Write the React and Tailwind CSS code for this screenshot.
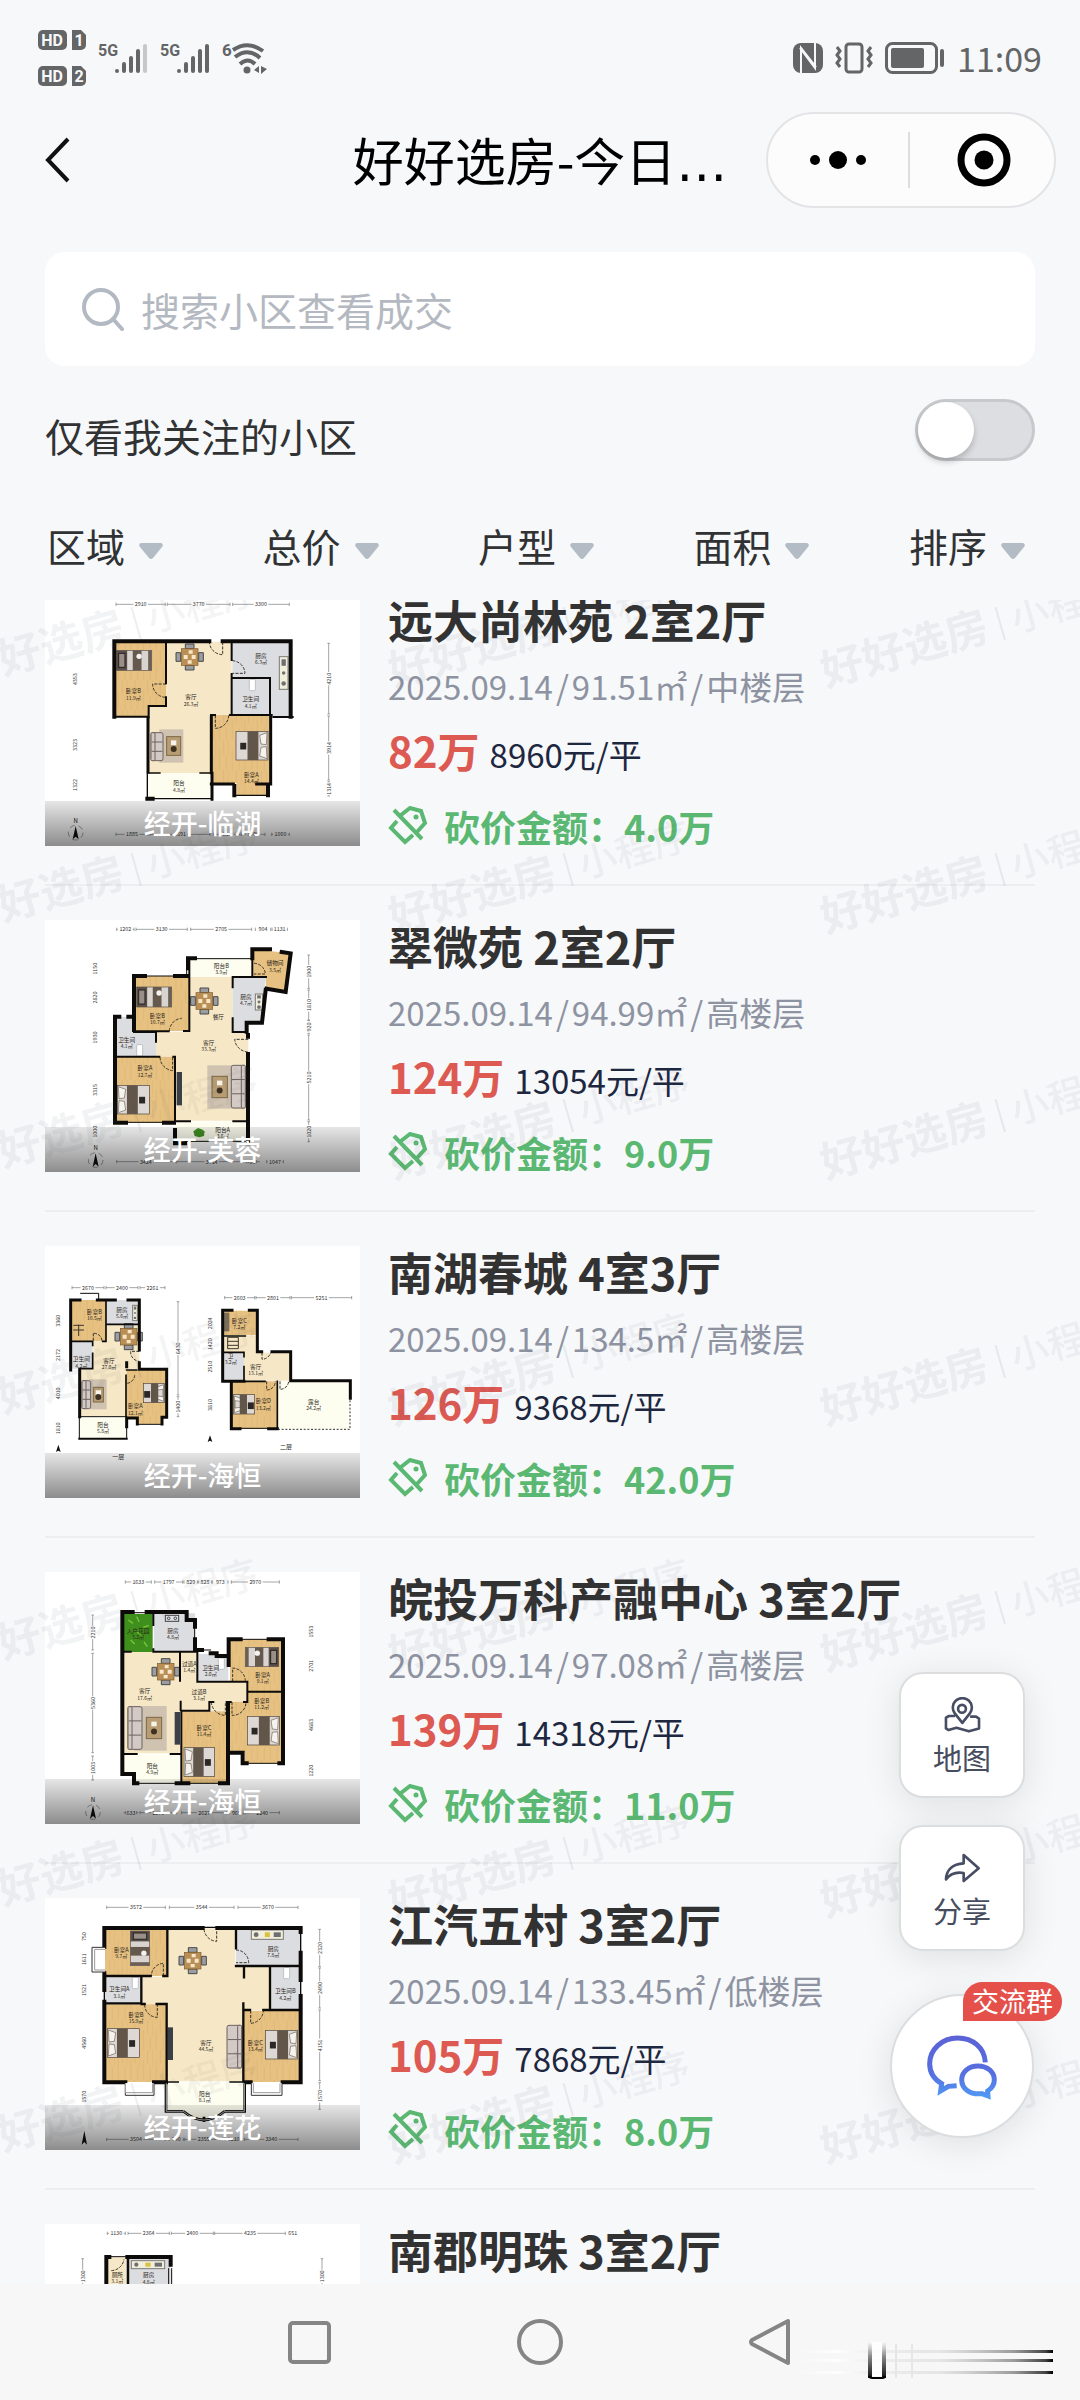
import React from "react";

const WOOD = "#e6c182";
const CREAM = "#f6e8c6";
const TILE = "#dcdde0";
const PALE = "#fdfeef";
const GRASS = "#3f8f1c";

/* ---------- floor plan furniture ---------- */

function Bed({ x, y, w = 96, h = 86, head = "left" }) {
  const flip = head === "right" ? `translate(${2 * x + w} 0) scale(-1 1)` : undefined;
  return (
    <g transform={flip}>
      <rect x={x} y={y} width={w} height={h} fill="#ddd8d4" stroke="#4a4038" strokeWidth="2" />
      <path d={`M${x + 3} ${y + 4}l22 8-4 26-16 2zM${x + 3} ${y + h - 4}l22-8-4-26-16-2z`} fill="#f6f3ee" stroke="#6b6258" strokeWidth="2" />
      <rect x={x + w * 0.3} y={y} width={w * 0.34} height={h} fill="#62564a" />
      <rect x={x + w * 0.68} y={y + h * 0.4} width="18" height="20" fill="#2b2724" />
    </g>
  );
}

function SingleBed({ x, y, w = 105, h = 60, head = "left" }) {
  const flip = head === "right" ? `translate(${2 * x + w} 0) scale(-1 1)` : undefined;
  return (
    <g transform={flip}>
      <rect x={x} y={y} width={w} height={h} fill="#d9d4d0" stroke="#5b5048" strokeWidth="2" />
      <rect x={x} y={y} width={w * 0.3} height={h} fill="#5a4f48" />
      <rect x={x + 6} y={y + 9} width={w * 0.18} height={h - 18} fill="#9a8f88" stroke="#26211e" strokeWidth="3" />
      <rect x={x + w * 0.46} y={y} width={w * 0.25} height={h} fill="#65594e" />
      <circle cx={x + w * 0.64} cy={y + h * 0.3} r="8" fill="#f4f1ee" />
      <rect x={x + w * 0.9} y={y} width={w * 0.1} height={h} fill="#6b5f55" />
    </g>
  );
}

function Dining({ x, y }) {
  return (
    <g>
      <path d={`M${x - 13} ${y - 39}h26v14h-26zM${x - 13} ${y + 25}h26v14h-26zM${x - 41} ${y - 13}h14v26h-14zM${x + 27} ${y - 13}h14v26h-14z`} fill="#9c9da0" stroke="#47484b" strokeWidth="3" />
      <rect x={x - 25} y={y - 25} width="50" height="50" fill="#b98f56" stroke="#7c5c30" strokeWidth="2" />
      <path d={`M${x - 18} ${y - 6}h12v12h-12zM${x + 6} ${y - 6}h12v12h-12zM${x - 3} ${y - 20}h12v10h-12zM${x - 6} ${y + 10}h12v10h-12z`} fill="#f7e6c8" />
    </g>
  );
}

function Sofa({ x, y, w = 42, h = 128, back = "left" }) {
  const bx = back === "left" ? x : x + w - 12;
  return (
    <g fill="#d3c9c5" stroke="#6d625f" strokeWidth="3">
      <rect x={x} y={y} width={w} height={h} rx="6" />
      <rect x={bx} y={y} width="12" height={h} rx="3" />
      <path d={`M${x + 2} ${y + h / 3}h${w - 4}M${x + 2} ${y + (2 * h) / 3}h${w - 4}`} />
    </g>
  );
}

function Rug({ x, y, w, h, tx, ty, tw = 46, th = 64 }) {
  return (
    <g>
      <rect x={x} y={y} width={w} height={h} fill="#cfc2b0" />
      <rect x={tx} y={ty} width={tw} height={th} fill="#b89d74" stroke="#7a6744" strokeWidth="3" />
      <rect x={tx + tw / 2 - 8} y={ty + th * 0.2} width="16" height="14" fill="#f7f3ea" />
      <circle cx={tx + tw / 2} cy={ty + th * 0.66} r="9" fill="#3d3222" />
    </g>
  );
}

function Tag({ x, y, name, area }) {
  return (
    <text x={x} y={y} textAnchor="middle" fontSize="17" fill="#2a241a">
      <tspan x={x}>{name}</tspan>
      <tspan x={x} dy="19" fontSize="15">{area}</tspan>
    </text>
  );
}

const Stove = ({ x, y, w, h }) => (
  <g>
    <rect x={x} y={y} width={w} height={h} fill="#f2eedc" stroke="#7b7a75" strokeWidth="3" />
    {w > h ? (
      <g fill="#6e6f73">
        <circle cx={x + w * 0.15} cy={y + h / 2} r={h * 0.26} />
        <rect x={x + w * 0.42} y={y + h * 0.25} width={w * 0.16} height={h * 0.5} fill="#d9c23f" />
        <rect x={x + w * 0.7} y={y + h * 0.25} width={w * 0.22} height={h * 0.5} />
      </g>
    ) : (
      <g fill="#6e6f73">
        <rect x={x + w * 0.25} y={y + h * 0.08} width={w * 0.5} height={h * 0.2} />
        <circle cx={x + w / 2} cy={y + h * 0.5} r={w * 0.2} />
        <circle cx={x + w / 2} cy={y + h * 0.82} r={w * 0.26} />
      </g>
    )}
  </g>
);

const Toilet = ({ x, y }) => <rect x={x} y={y} width="18" height="34" rx="3" fill="#fff" stroke="#a9abae" strokeWidth="2" />;

function HDim({ y, parts }) {
  return (
    <g>
      {parts.map(([x1, x2, label]) => (
        <g key={x1}>
          <path d={`M${x1} ${y}H${(x1 + x2) / 2 - 22}M${(x1 + x2) / 2 + 22} ${y}H${x2}M${x1} ${y - 5}v10M${x2} ${y - 5}v10`} stroke="#77797c" strokeWidth="2" />
          <text x={(x1 + x2) / 2} y={y + 6} textAnchor="middle" fontSize="16" fill="#333">{label}</text>
        </g>
      ))}
    </g>
  );
}

function VDim({ x, parts, line = true }) {
  return (
    <g>
      {parts.map(([y1, y2, label]) => {
        const m = (y1 + y2) / 2;
        return (
          <g key={y1}>
            {line && <path d={`M${x} ${y1}V${m - 20}M${x} ${m + 20}V${y2}M${x - 4} ${y1}h8M${x - 4} ${y2}h8`} stroke="#77797c" strokeWidth="2" />}
            <text x={x} y={m} transform={`rotate(-90 ${x} ${m})`} dy="6" textAnchor="middle" fontSize="16" fill="#333">{label}</text>
          </g>
        );
      })}
    </g>
  );
}

function North({ x, y }) {
  return (
    <g>
      <circle cx={x} cy={y} r="22" fill="none" stroke="#777" strokeWidth="2" strokeDasharray="16 12" />
      <path d={`M${x} ${y - 20}l9 40-9-8-9 8z`} fill="#111" />
      <text x={x} y={y - 30} textAnchor="middle" fontSize="18" fill="#111">N</text>
    </g>
  );
}

const Fill = ({ c, d }) => <path d={d} fill={c} />;
const Wall = ({ d, w = 12 }) => <path d={d} fill="none" stroke="#0c0b09" strokeWidth={w} strokeLinecap="square" />;
const Door = ({ d }) => <path d={d} fill="none" stroke="#3a352b" strokeWidth="3" strokeDasharray="9 4" />;

function Plan({ top, height = 756, children }) {
  return (
    <svg viewBox={`135 ${top} 945 ${height}`} className="block w-full" aria-hidden="true">
      <defs>
        <pattern id={`grain${top}`} width="38" height="90" patternUnits="userSpaceOnUse">
          <path d="M0 0V50M12 30V90M25 0V40M33 50V90" stroke="#c8984a" strokeOpacity=".35" strokeWidth="2" />
        </pattern>
      </defs>
      {children}
    </svg>
  );
}

/* ---------- the six plans ---------- */

function PlanA() {
  return (
    <Plan top={12}>
      <Fill c={CREAM} d="M445 345H498V155H695V375H637V550H445z" />
      <Fill c={WOOD} d="M343 155H498V345H445V380H343z" />
      <Fill c="url(#grain12)" d="M343 155H498V345H445V380H343z" />
      <Fill c={TILE} d="M697 155H872V380H697z" />
      <Fill c={WOOD} d="M637 375H812V580H804V615H710V580H637z" />
      <Fill c="url(#grain12)" d="M637 375H812V580H804V615H710V580H637z" />
      <Fill c={PALE} d="M445 550H635V625H445z" />
      <SingleBed x={350} y={181} />
      <Dining x={569} y={201} />
      <Rug x={478} y={418} w={72} h={100} tx={500} ty={440} tw={42} th={56} />
      <Sofa x={453} y={428} w={36} h={84} />
      <Bed x={708} y={424} head="right" />
      <Stove x={838} y={200} w={26} h={98} />
      <Toilet x={748} y={268} />
      <Door d="M628 154A40 40 0 0 0 668 194V154M697 212A40 40 0 0 1 735 250H697M498 282H458A40 40 0 0 0 498 322M646 376V415A40 40 0 0 0 686 376" />
      <Wall d="M343 380V154H628M668 154H872V380" />
      <Wall w={6} d="M498 160V280M498 322V348H446V382M695 160V210M695 252V375M697 264H810V375M633 375H645M690 375H815M343 380H445M820 381H878" />
      <Wall d="M444 385V545M634 380V548M812 380V582H770M634 582H700M636 550V628" w={9} />
      <Wall d="M703 588V616M804 590V616M442 626H458" />
      <Wall w={4} d="M710 616H800M442 550V620M460 626H635M445 549H480M600 549H635" />
      <Tag x={400} y={310} name="卧室B" area="11.9㎡" />
      <Tag x={573} y={328} name="客厅" area="26.3㎡" />
      <Tag x={783} y={204} name="厨房" area="6.3㎡" />
      <Tag x={752} y={334} name="卫生间" area="4.1㎡" />
      <Tag x={754} y={560} name="卧室A" area="14.4㎡" />
      <Tag x={537} y={586} name="阳台" area="4.8㎡" />
      <HDim y={43} parts={[[348, 496, "2910"], [502, 690, "3770"], [698, 868, "3300"]]} />
      <HDim y={733} parts={[[348, 444, "1885"], [450, 630, "3591"], [640, 720, "980"], [724, 795, "1700"], [815, 868, "1060"]]} />
      <VDim x={224} line={false} parts={[[180, 355, "4353"], [400, 530, "3323"], [550, 620, "1322"]]} />
      <VDim x={986} parts={[[160, 372, "4210"], [378, 570, "3914"], [575, 618, "1314"]]} />
      <North x={227} y={728} />
    </Plan>
  );
}

function PlanB() {
  return (
    <Plan top={60}>
      <Fill c={CREAM} d="M568 230H698V395H745V662H525V470H468V395H568z" />
      <Fill c={WOOD} d="M402 228H568V393H402zM345 470H525V668H345z" />
      <Fill c="url(#grain60)" d="M402 228H568V393H402zM345 470H525V668H345z" />
      <Fill c={WOOD} d="M757 148L873 160L856 276L798 266V230H757z" />
      <Fill c={TILE} d="M345 350H405V395H468V470H345zM698 232H798L786 368H738V395H698z" />
      <Fill c={PALE} d="M565 177H760V230H565zM525 665H745V725H525z" />
      <SingleBed x={410} y={261} />
      <Bed x={352} y={556} />
      <Dining x={613} y={303} />
      <Rug x={622} y={496} w={114} h={130} tx={636} ty={529} />
      <Sofa x={694} y={496} back="right" />
      <rect x="530" y="516" width="16" height="100" fill="#3b4048" />
      <Stove x={766} y={282} w={22} h={48} />
      <Toilet x={410} y={434} />
      <path d="M580 694l14-10 10 4 10 6-2 14-14 4-14-4z" fill="#3f9124" />
      <Door d="M508 393A40 40 0 0 1 545 355M480 472A42 42 0 0 0 518 512V472M745 418H704A42 42 0 0 0 745 456M762 190A34 34 0 0 1 796 222H762" />
      <Wall d="M402 390V228H435M525 228H562M345 350H358M385 350H400M345 350V668H378M492 668H522M345 352V400M564 205V175H585M757 175V148H810M845 156L872 160L857 276L800 266M797 270L786 368H740V395M744 410V405M744 462V730M525 690V730H555" />
      <Wall w={6} d="M568 178V393H552M402 394H506M402 396H468V425M345 470H478M520 470H525V668M698 232V262M698 355V396H738M698 231H798M757 178V230M525 664H570M700 664H744" />
      <Wall w={3} d="M435 228H525M585 176H757M378 667H492M560 180V228M555 724H740" />
      <Tag x={472} y={353} name="卧室B" area="10.7㎡" />
      <Tag x={655} y={356} name="餐厅" area="" />
      <Tag x={380} y={426} name="卫生间" area="4.1㎡" />
      <Tag x={435} y={511} name="卧室A" area="12.7㎡" />
      <Tag x={626} y={435} name="客厅" area="33.3㎡" />
      <Tag x={738} y={296} name="厨房" area="4.7㎡" />
      <Tag x={825} y={196} name="储物间" area="3.5㎡" />
      <Tag x={664} y={203} name="阳台B" area="3.9㎡" />
      <Tag x={668} y={696} name="阳台A" area="3.6㎡" />
      <HDim y={88} parts={[[350, 402, "1202"], [408, 562, "3130"], [572, 755, "2705"], [766, 812, "904"], [816, 862, "1131"]]} />
      <HDim y={785} parts={[[350, 525, "3424"], [530, 740, "3714"], [745, 770, "60"], [800, 850, "1047"]]} />
      <VDim x={285} line={false} parts={[[180, 232, "1150"], [240, 345, "2820"], [360, 465, "1930"], [480, 660, "3315"], [670, 720, "1000"]]} />
      <VDim x={926} parts={[[165, 265, "1900"], [270, 360, "1810"], [362, 400, "920"], [405, 660, "5210"], [665, 725, "1020"]]} />
      <North x={287} y={780} />
    </Plan>
  );
}

function PlanC() {
  return (
    <Plan top={78}>
      <Fill c={CREAM} d="M320 313H418V448H380V588H240V448H280V365H320z" />
      <Fill c={WOOD} d="M212 240H318V364H212zM380 450H500V592H484V612H415V592H380z" />
      <Fill c="url(#grain78)" d="M212 240H318V364H212zM380 450H500V592H484V612H415V592H380z" />
      <Fill c={TILE} d="M320 240H418V312H320zM212 365H278V446H212z" />
      <Fill c={PALE} d="M238 592H380V655H238z" />
      <Fill c={CREAM} d="M670 348H772V398H872V482H732V398H670z" />
      <Fill c={WOOD} d="M670 272H772V346H670zM694 484H832V626H694z" />
      <Fill c="url(#grain78)" d="M670 272H772V346H670zM694 484H832V626H694z" />
      <Fill c={TILE} d="M670 398H732V484H670z" />
      <Fill c={PALE} d="M834 484H1050V628H834z" />
      <Dining x={386} y={350} />
      <Rug x={268} y={478} w={52} h={90} tx={280} ty={502} tw={30} th={44} />
      <Sofa x={246} y={482} w={26} h={84} />
      <Bed x={430} y={490} w={64} h={58} head="right" />
      <Bed x={700} y={524} w={64} h={58} />
      <Stove x={398} y={256} w={14} h={46} />
      <path d="M220 316h32M220 330h32M236 314v34M683 352h32v34h-32zM683 364h32M683 376h32" fill="none" stroke="#40372a" strokeWidth="3" />
      <rect x="672" y="278" width="16" height="56" fill="#7b6d58" />
      <Door d="M418 394H392A28 28 0 0 0 418 424M382 490A26 26 0 0 0 404 466M786 398V418A28 28 0 0 0 812 398M800 484V510A26 26 0 0 0 826 484M840 484V508A26 26 0 0 0 866 484M280 340V364M282 340A24 24 0 0 1 306 362" />
      <Wall w={9} d="M212 450V240H240M292 240H346M384 240H418V390M418 428V448H500V592H486V612M412 612V594H380M239 450V590M380 440V428M380 600V620" />
      <Wall w={9} d="M668 484V271H696M748 271H772V395H785M816 395H872V482H1051V535M668 484H732M694 488V626H720M806 626H832" />
      <Wall w={5} d="M318 240V364H308M212 364H278V376M278 400V446H238M320 313H412M380 450H410M378 466V588M670 348H736M732 398V410M670 397H732M732 440V484H760M832 484V626M765 484H795" />
      <Wall w={3} d="M242 220H296V240M415 613H484M238 590V656M380 590V656M238 590H378M720 625H806" />
      <Wall w={6} d="M238 656H380" />
      <path d="M834 628H1050V535" fill="none" stroke="#333" strokeWidth="3" strokeDasharray="6 5" />
      <Tag x={283} y={281} name="卧室B" area="10.5㎡" />
      <Tag x={366} y={276} name="厨房" area="5.6㎡" />
      <Tag x={244} y={424} name="卫生间" area="4.2㎡" />
      <Tag x={327} y={428} name="客厅" area="27.0㎡" />
      <Tag x={406} y={565} name="卧室A" area="12.1㎡" />
      <Tag x={309} y={621} name="阳台" area="5.8㎡" />
      <Tag x={718} y={308} name="卧室C" area="7.2㎡" />
      <Tag x={692} y={414} name="卫" area="3.2㎡" />
      <Tag x={767} y={446} name="客厅" area="13.1㎡" />
      <Tag x={790} y={550} name="卧室D" area="13.2㎡" />
      <Tag x={941} y={552} name="露台" area="24.2㎡" />
      <HDim y={203} parts={[[216, 312, "2670"], [318, 414, "2400"], [420, 495, "2261"]]} />
      <HDim y={233} parts={[[674, 764, "2603"], [768, 870, "2801"], [874, 1055, "5251"]]} />
      <VDim x={175} line={false} parts={[[245, 360, "3360"], [370, 440, "2172"], [455, 585, "4010"], [595, 655, "1810"]]} />
      <VDim x={534} parts={[[245, 525, "6430"], [530, 590, "1400"]]} />
      <VDim x={630} line={false} parts={[[275, 345, "2024"], [350, 395, "1420"], [400, 480, "2510"], [490, 620, "3810"]]} />
      <path d="M175 674l7 22-7-4-7 4zM630 646l7 20-7-4-7 4z" fill="#111" />
      <text x="355" y="718" textAnchor="middle" fontSize="18" fill="#222">一层</text>
      <text x="858" y="688" textAnchor="middle" fontSize="18" fill="#222">二层</text>
    </Plan>
  );
}

function PlanD() {
  return (
    <Plan top={66}>
      <Fill c={GRASS} d="M372 192H458V306H372z" />
      <Fill c={TILE} d="M462 190H585V303H462zM592 312H685V392H592z" />
      <Fill c={CREAM} d="M372 306H592V395H742V455H680V482H542V610H372z" />
      <Fill c={WOOD} d="M690 268H848V640H735V605H685V455H742V395H690zM545 484H683V700H545z" />
      <Fill c="url(#grain66)" d="M690 268H848V640H735V605H685V455H742V395H690zM545 484H683V700H545z" />
      <Fill c={PALE} d="M372 612H542V700H408V665H372z" />
      <path d="M385 210l14 10M410 200l8 16M430 232l16-6M392 270l12 12M432 276l10 14M412 246l10 8" stroke="#79c53c" strokeWidth="4" />
      <g fill="#dfe1e4" stroke="#444" strokeWidth="3"><rect x="496" y="196" width="40" height="18" /><circle cx="506" cy="205" r="4" /><circle cx="526" cy="205" r="4" /></g>
      <Dining x={497} y={365} />
      <Rug x={402} y={468} w={98} h={134} tx={439} ty={502} />
      <Sofa x={384} y={470} />
      <rect x="524" y="486" width="16" height="98" fill="#3b4048" />
      <SingleBed x={736} y={292} w={100} h={58} head="right" />
      <Bed x={742} y={499} head="right" />
      <Bed x={552} y={593} w={92} />
      <Toilet x={655} y={324} />
      <Door d="M698 394V354A40 40 0 0 1 736 392M696 456V496A40 40 0 0 0 738 458M634 456A42 42 0 0 0 676 496V458" />
      <Wall d="M367 668V186H398M440 186H560V210H585V230M585 268V300H606M632 310H650V318H686M686 345V268H722M806 268H849V640H838M367 672H402V700H412M684 460V700H660M686 608H728V640H740M530 700H565" />
      <Wall w={6} d="M460 190V225M460 298V305H592V392M540 392V308M375 305H392M592 395H742V430M742 425H848M640 456H628V482H544V700M542 455V480M680 456H692M375 612H410M512 612H542M732 456H742V428" />
      <Wall w={3} d="M398 188H440M584 230V268M606 300H632M722 268H806M740 640H838M412 700H530M565 700H660" />
      <Tag x={414} y={248} name="入户花园" area="3.2㎡" />
      <Tag x={519} y={248} name="厨房" area="4.8㎡" />
      <Tag x={568} y={348} name="过道A" area="1.4㎡" />
      <Tag x={632} y={360} name="卫生间" area="2.0㎡" />
      <Tag x={788} y={380} name="卧室A" area="9.1㎡" />
      <Tag x={434} y={430} name="客厅" area="17.6㎡" />
      <Tag x={597} y={432} name="过道B" area="3.1㎡" />
      <Tag x={785} y={458} name="卧室B" area="11.2㎡" />
      <Tag x={612} y={540} name="卧室C" area="11.4㎡" />
      <Tag x={457} y={653} name="阳台" area="4.9㎡" />
      <HDim y={96} parts={[[376, 454, "1633"], [464, 548, "1797"], [552, 592, "829"], [596, 634, "828"], [638, 684, "973"], [694, 838, "2970"]]} />
      <HDim y={788} parts={[[376, 410, "633"], [420, 530, "2370"], [545, 680, "2627"], [688, 730, "965"], [735, 838, "2240"]]} />
      <VDim x={278} parts={[[195, 300, "2210"], [310, 608, "5360"], [618, 690, "1003"]]} />
      <VDim x={933} line={false} parts={[[200, 290, "1553"], [300, 395, "2701"], [430, 620, "4683"], [632, 692, "1220"]]} />
      <North x={279} y={786} />
    </Plan>
  );
}

function PlanE() {
  return (
    <Plan top={84}>
      <Fill c={CREAM} d="M502 175H706V290H810V420H730V634H502V402H425V320H502z" />
      <Fill c={WOOD} d="M315 175H500V318H315zM315 403H500V636H315zM732 422H900V636H732z" />
      <Fill c="url(#grain84)" d="M315 175H500V318H315zM315 403H500V636H315zM732 422H900V636H732z" />
      <Fill c={TILE} d="M708 175H902V288H708zM812 292H902V418H812zM315 322H423V400H315z" />
      <Fill c={PALE} d="M500 636H732V724H674Q612 776 550 724H500z" />
      <g transform="rotate(90 420 235)"><SingleBed x={368} y={206} w={104} h={58} /></g>
      <Dining x={578} y={272} />
      <Sofa x={681} y={466} w={44} h={128} back="right" />
      <rect x="503" y="472" width="16" height="98" fill="#3b4048" />
      <Bed x={322} y={476} />
      <Bed x={797} y={481} w={96} head="right" />
      <Stove x={754} y={180} w={96} h={28} />
      <Toilet x={397} y={322} />
      <Toilet x={851} y={292} />
      <Door d="M612 178A40 40 0 0 0 650 214V178M708 240A38 38 0 0 1 746 278H708M490 318V280A38 38 0 0 0 454 318M434 404A38 38 0 0 0 472 442V404M752 422V460A40 40 0 0 0 790 422" />
      <Wall d="M313 230V174H608M652 174H902V186M902 248V330M902 378V637H848M752 637H738M313 310V360M313 395V637H376M462 637H498" />
      <Wall w={7} d="M502 180V318H490M452 318H318M424 322V400H318M470 402H500V634M708 180V235M708 288H900M732 292V322M810 292V415M730 400V634M735 420H750M790 420H900M425 402H434" />
      <Wall w={4} d="M500 636H535M690 636H732M313 360V395M902 186V248M902 330V378M612 172H650" />
      <path d="M498 640V724H550M734 640V724H674M550 724Q612 776 674 724M612 740V756" fill="none" stroke="#0c0b09" strokeWidth="8" />
      <path d="M499 640V724H550M733 640V724H674M550 724Q612 776 674 724" fill="none" stroke="#fff" strokeWidth="2" />
      <g fill="#fff" stroke="#333" strokeWidth="3">
        <path d="M315 232H276V306H315M376 640V676H462V640M754 640V676H846V640" />
        <path d="M315 238H284V300H315M376 640V668H458V640M760 640V668H840V640" stroke="#999" />
      </g>
      <Tag x={364} y={245} name="卧室A" area="9.7㎡" />
      <Tag x={820} y={243} name="厨房" area="7.8㎡" />
      <Tag x={358} y={364} name="卫生间A" area="3.1㎡" />
      <Tag x={856} y={370} name="卫生间B" area="4.2㎡" />
      <Tag x={408} y={440} name="卧室B" area="15.9㎡" />
      <Tag x={618} y={525} name="客厅" area="44.5㎡" />
      <Tag x={766} y={525} name="卧室C" area="13.4㎡" />
      <Tag x={614} y={678} name="阳台" area="8.1㎡" />
      <HDim y={112} parts={[[320, 496, "3572"], [508, 702, "3544"], [714, 894, "3670"]]} />
      <HDim y={808} parts={[[320, 496, "3504"], [508, 550, "740"], [554, 668, "2355"], [674, 728, "1210"], [734, 894, "3340"]]} />
      <VDim x={253} line={false} parts={[[180, 220, "750"], [225, 310, "1611"], [325, 395, "1521"], [405, 632, "4560"], [640, 720, "1570"]]} />
      <VDim x={959} parts={[[178, 290, "2320"], [294, 414, "2490"], [420, 632, "4151"], [638, 718, "1570"]]} />
      <path d="M253 782l8 42-8-8-8 8z" fill="#111" />
    </Plan>
  );
}

function PlanF() {
  return (
    <Plan top={0}>
      <Fill c={CREAM} d="M325 100H378V400H325z" />
      <Fill c={TILE} d="M390 100H512V400H390z" />
      <Stove x={394} y={110} w={100} h={24} />
      <Door d="M334 140A40 40 0 0 0 372 106" />
      <Wall d="M319 400V99H328M382 99H512V122" />
      <Wall w={8} d="M384 104V400" />
      <Wall w={3} d="M328 98H382M506 134V400M515 134V400" />
      <Tag x={352} y={158} name="厕所" area="3.1㎡" />
      <Tag x={446} y={160} name="厨房" area="4.8㎡" />
      <HDim y={28} parts={[[322, 376, "1130"], [384, 508, "2364"], [514, 640, "2400"], [644, 856, "4235"]]} />
      <text x="878" y="34" textAnchor="middle" fontSize="16" fill="#333">651</text>
      <VDim x={248} parts={[[104, 210, "1300"]]} />
      <VDim x={966} parts={[[104, 210, "1300"]]} />
    </Plan>
  );
}

/* ---------- icons ---------- */

const HdBadge = ({ n }) => (
  <svg width="48" height="20" viewBox="0 0 48 20" className="block" role="img" aria-label={`HD ${n}`}>
    <rect width="29" height="20" rx="5" fill="#646566" />
    <path d="M34 0h9l5 5v10a5 5 0 0 1-5 5h-9z" fill="#646566" />
    <text x="14" y="16" textAnchor="middle" fontSize="16" fontWeight="700" fill="#f7f8fa" fontFamily="Roboto, sans-serif">HD</text>
    <text x="41" y="16" textAnchor="middle" fontSize="16" fontWeight="700" fill="#f7f8fa" fontFamily="Roboto, sans-serif">{n}</text>
  </svg>
);

function Signal({ weak }) {
  return (
    <svg width="50" height="32" viewBox="0 0 50 32" role="img" aria-label="5G">
      <text x="0" y="14" fontSize="16" fontWeight="700" fill="#646566" fontFamily="Roboto, sans-serif">5G</text>
      <g stroke="#646566" strokeWidth="4" strokeLinecap="round">
        <path d="M19 29v0M26 22v7M33 16v13M40 9v20" />
        <path d="M47 4v25" stroke={weak ? "#c6c7c8" : "#646566"} />
      </g>
    </svg>
  );
}

const WifiSix = () => (
  <svg width="46" height="32" viewBox="0 0 46 32" role="img" aria-label="Wi-Fi 6">
    <text x="0" y="14" fontSize="17" fontWeight="700" fill="#646566" fontFamily="Roboto, sans-serif">6</text>
    <g fill="none" stroke="#646566" strokeWidth="4">
      <path d="M11 8Q26-2 41 9M13 15Q26 5 38 16M18 22Q26 15 33 22" />
    </g>
    <circle cx="25" cy="28" r="3.500" fill="#646566" />
    <path d="M37 24v7l-5-3zM39 24v8l6-5z" fill="#646566" />
  </svg>
);

const Nfc = () => (
  <svg width="30" height="30" viewBox="0 0 30 30" aria-hidden="true">
    <rect width="30" height="30" rx="8" fill="#646566" />
    <path d="M8 30V5l15 19M22 0v25L7 5" fill="none" stroke="#f7f8fa" strokeWidth="2" />
  </svg>
);

const Vibrate = () => (
  <svg width="38" height="32" viewBox="0 0 38 32" aria-hidden="true" fill="none" stroke="#646566" strokeWidth="3">
    <rect x="11" y="2" width="16" height="28" rx="3" />
    <path d="M2 5l3 4-3 4 3 4-3 4 3 4M36 5l-3 4 3 4-3 4 3 4-3 4" />
  </svg>
);

const Battery = () => (
  <svg width="60" height="32" viewBox="0 0 60 32" role="img" aria-label="battery">
    <rect x="1.500" y="1.500" width="50" height="29" rx="6" fill="none" stroke="#646566" strokeWidth="3" />
    <rect x="6" y="6" width="33" height="20" rx="2" fill="#646566" />
    <path d="M57 9v14" stroke="#646566" strokeWidth="4" strokeLinecap="round" />
  </svg>
);

const TagIcon = () => (
  <svg width="40" height="40" viewBox="0 0 40 40" aria-hidden="true" fill="none" stroke="#5bb872" strokeWidth="4">
    <path d="M6 4l28 29M13 9l9-7 11 3 4 12-8 9M9 15l-6 7 14 14 8-7" />
    <circle cx="28" cy="11" r="2.500" fill="#5bb872" stroke="none" />
  </svg>
);

const MapIcon = () => (
  <svg width="38" height="36" viewBox="248 172 114 110" aria-hidden="true" fill="none" stroke="#474d63" strokeWidth="8" strokeLinejoin="round" strokeLinecap="round">
    <path d="M306 251l-23-29a29 29 0 1 1 46 0z" />
    <circle cx="305" cy="208" r="12" />
    <path d="M281 230l-16 0-9 5v33l8 5 24-7 38 11 31-9v-30l-9-6-15 0" />
  </svg>
);

const ShareIcon = () => (
  <svg width="38" height="36" viewBox="248 622 114 108" aria-hidden="true" fill="none" stroke="#474d63" strokeWidth="8" strokeLinejoin="round">
    <path d="M310 637l45 40-45 38v-24c-22-4-40 2-53 19 1-28 20-46 53-48z" />
  </svg>
);

const ChatIcon = () => (
  <svg width="70" height="66" viewBox="202 1186 210 198" aria-hidden="true" fill="none" strokeWidth="15">
    <defs>
      <linearGradient id="chat" x1="0" y1="1186" x2="0" y2="1384" gradientUnits="userSpaceOnUse">
        <stop offset="0" stopColor="#5b62d6" />
        <stop offset=".6" stopColor="#5670e0" />
        <stop offset="1" stopColor="#4fa0f8" />
      </linearGradient>
    </defs>
    <path d="M377 1268C374 1224 340 1195 294 1195C246 1195 210 1230 210 1272C210 1298 224 1319 246 1332L243 1354L266 1340L291 1338" stroke="url(#chat)" />
    <path d="M385 1369L366 1362C330 1366 306 1346 306 1320C306 1296 328 1279 355 1279C383 1279 404 1297 404 1320C404 1334 396 1346 384 1354z" stroke="url(#chat)" />
  </svg>
);

/* ---------- data ---------- */

const listings = [
  { title: "远大尚林苑 2室2厅", area: "91.51㎡", floor: "中楼层", price: "82万", unit: "8960元/平", cut: "4.0万", place: "经开-临湖", Plan: PlanA },
  { title: "翠微苑 2室2厅", area: "94.99㎡", floor: "高楼层", price: "124万", unit: "13054元/平", cut: "9.0万", place: "经开-芙蓉", Plan: PlanB },
  { title: "南湖春城 4室3厅", area: "134.5㎡", floor: "高楼层", price: "126万", unit: "9368元/平", cut: "42.0万", place: "经开-海恒", Plan: PlanC },
  { title: "皖投万科产融中心 3室2厅", area: "97.08㎡", floor: "高楼层", price: "139万", unit: "14318元/平", cut: "11.0万", place: "经开-海恒", Plan: PlanD },
  { title: "江汽五村 3室2厅", area: "133.45㎡", floor: "低楼层", price: "105万", unit: "7868元/平", cut: "8.0万", place: "经开-莲花", Plan: PlanE },
  { title: "南郡明珠 3室2厅", area: "", floor: "", price: "", unit: "", cut: "", place: "", Plan: PlanF },
];

const filters = ["区域", "总价", "户型", "面积", "排序"];

/* ---------- page parts ---------- */

function StatusBar() {
  return (
    <div className="flex h-[105px] shrink-0 items-center justify-between px-[38px] pt-[11px]">
      <div className="flex items-center gap-3">
        <div className="flex flex-col gap-4">
          <HdBadge n="1" />
          <HdBadge n="2" />
        </div>
        <Signal weak />
        <Signal />
        <WifiSix />
      </div>
      <div className="flex items-center gap-3">
        <Nfc />
        <Vibrate />
        <Battery />
        <span className="text-[34px] leading-none text-[#646566]">11:09</span>
      </div>
    </div>
  );
}

function Header() {
  return (
    <header className="grid h-[110px] shrink-0 grid-cols-[1fr_auto_1fr] items-center px-6">
      <button type="button" aria-label="返回" className="flex h-16 w-[68px] items-center justify-center justify-self-start">
        <svg width="28" height="48" viewBox="0 0 28 48" fill="none" stroke="#111" strokeWidth="4" aria-hidden="true">
          <path d="M24 3L4 24l20 21" />
        </svg>
      </button>
      <h1 className="pt-0.5 text-[51px] leading-[60px] whitespace-nowrap text-black">
        好好选房-今日<span className="font-['DejaVu_Sans',sans-serif]">…</span>
      </h1>
      <div className="flex h-24 w-[290px] items-center justify-self-end rounded-full border-2 border-[#e3e4e6] bg-[#fcfcfd]">
        <button type="button" aria-label="更多" className="flex flex-1 items-center justify-center">
          <svg width="60" height="20" viewBox="0 0 60 20" aria-hidden="true">
            <circle cx="7" cy="10" r="5" />
            <circle cx="30" cy="10" r="9" />
            <circle cx="53" cy="10" r="5" />
          </svg>
        </button>
        <span className="h-14 w-0.5 bg-[#dcdddf]" />
        <button type="button" aria-label="关闭" className="flex flex-1 items-center justify-center pl-1">
          <svg width="54" height="54" viewBox="0 0 54 54" aria-hidden="true">
            <circle cx="27" cy="27" r="23" fill="none" stroke="#000" strokeWidth="7" />
            <circle cx="27" cy="27" r="9.500" />
          </svg>
        </button>
      </div>
    </header>
  );
}

function Controls() {
  return (
    <section className="shrink-0 px-[45px] pt-[37px]">
      <label className="flex h-[114px] items-center gap-4 rounded-[20px] bg-white px-9">
        <svg width="44" height="44" viewBox="0 0 44 44" fill="none" stroke="#b3b9c2" strokeWidth="4" aria-hidden="true">
          <circle cx="20" cy="20" r="17" />
          <path d="M32 32l9 10" strokeLinecap="round" />
        </svg>
        <input
          type="search"
          aria-label="搜索小区"
          placeholder="搜索小区查看成交"
          className="h-14 min-w-0 flex-1 bg-transparent text-[39px] text-[#323233] outline-none placeholder:text-[#b4b9c1] placeholder:opacity-100"
        />
      </label>
      <div className="mt-8 flex h-16 items-center justify-between">
        <label htmlFor="followed" className="pt-2.5 text-[39px] leading-[56px] text-[#303234]">仅看我关注的小区</label>
        <input
          id="followed"
          type="checkbox"
          role="switch"
          className="h-[62px] w-[120px] appearance-none rounded-full border-3 border-[#c8c9cc] bg-[#dddee2] before:block before:h-14 before:w-14 before:rounded-full before:bg-white before:shadow-[0_4px_6px_rgba(0,0,0,0.2)] before:content-[''] checked:bg-[#5bb872] checked:before:ml-auto"
        />
      </div>
      <div className="mt-[55px] mr-2.5 ml-0.5 flex h-[83px] items-start justify-between">
        {filters.map((name) => (
          <button key={name} type="button" className="flex items-center gap-3.5 text-[39px] leading-[56px] text-[#303234]">
            {name}
            <svg width="24" height="16" viewBox="0 0 24 16" className="mt-3" aria-hidden="true">
              <path d="M2 0h20q3 1 1 4l-9 11q-2 2-4 0L1 4q-2-3 1-4z" fill="#b3bcc4" />
            </svg>
          </button>
        ))}
      </div>
    </section>
  );
}

function Listing({ item }) {
  const { Plan: Drawing } = item;
  return (
    <li className="flex gap-7 border-b-2 border-[#eceef0] pt-[34px] pb-[38px]">
      <div className="relative h-[252px] w-[315px] shrink-0 overflow-hidden bg-white">
        <Drawing />
        {item.place && (
          <div className="absolute inset-x-0 bottom-0 flex h-[45px] items-center justify-center bg-linear-to-b from-black/10 to-black/45 pb-0.5 text-[27px] leading-none font-medium text-white">
            {item.place}
          </div>
        )}
      </div>
      <div className="min-w-0 flex-1">
        <h2 className="text-[45px] leading-[52px] font-bold text-[#323233]">{item.title}</h2>
        {item.price && (
          <>
            <p className="mt-5 flex gap-[3px] text-[33px] leading-[40px] text-[#8e93a2]">
              <span>2025.09.14</span>
              <span>/</span>
              <span>{item.area}</span>
              <span>/</span>
              <span>{item.floor}</span>
            </p>
            <p className="mt-5 flex h-12 items-baseline gap-2.5 text-[33px] leading-[48px] text-[#1d2740]">
              <strong className="text-[42px] font-bold text-[#dd5a52]">{item.price}</strong>
              {item.unit}
            </p>
            <p className="mt-8 flex items-center gap-4 text-[36px] leading-[40px] font-bold text-[#5bb872]">
              <TagIcon />
              <span>砍价金额：{item.cut}</span>
            </p>
          </>
        )}
      </div>
    </li>
  );
}

function Watermark() {
  return (
    <svg className="pointer-events-none absolute inset-0 h-full w-full" aria-hidden="true">
      <defs>
        <pattern id="mark" x="380" y="-113" width="432" height="246" patternUnits="userSpaceOnUse">
          <g transform="translate(14 200) rotate(-16)" fill="#3c465a">
            <text x="0" y="0" fontSize="43" fontWeight="700" fillOpacity=".065">好好选房</text>
            <path d="M185-30V4" stroke="#3c465a" strokeOpacity=".09" strokeWidth="2" />
            <text x="197" y="0" fontSize="38" fontWeight="500" fillOpacity=".06">小程序</text>
          </g>
        </pattern>
      </defs>
      <rect width="100%" height="100%" fill="url(#mark)" />
    </svg>
  );
}

function FloatingActions() {
  const box =
    "flex h-[126px] w-[126px] flex-col items-center justify-center gap-0.5 rounded-3xl border-2 border-[#dcdddf] bg-white pt-1.5 text-[29px] leading-[44px] text-[#474d5e] shadow-[0_6px_36px_rgba(0,0,0,0.1)]";
  return (
    <div className="absolute right-[46px] bottom-[146px] flex flex-col items-center gap-[27px]">
      <button type="button" className={box}>
        <MapIcon />
        地图
      </button>
      <button type="button" className={box}>
        <ShareIcon />
        分享
      </button>
      <button type="button" aria-label="交流群" className="relative mt-4 flex h-36 w-36 items-center justify-center rounded-full border-2 border-[#dcdddf] bg-white pt-1 shadow-[0_6px_36px_rgba(0,0,0,0.1)]">
        <ChatIcon />
        <span className="absolute -top-[14px] -right-[30px] flex h-[39px] items-center rounded-full rounded-bl-sm bg-[#e5504b] px-[9px] pb-0.5 text-[27px] leading-none whitespace-nowrap text-white">交流群</span>
      </button>
    </div>
  );
}

function SystemNav() {
  return (
    <nav className="relative flex h-[116px] shrink-0 items-center justify-center gap-[184px] bg-[#f7f7f7]">
      <button type="button" aria-label="最近任务">
        <svg width="46" height="46" viewBox="0 0 46 46" fill="none" stroke="#858585" strokeWidth="4" aria-hidden="true">
          <rect x="4" y="4" width="39" height="39" rx="3" />
        </svg>
      </button>
      <button type="button" aria-label="主页">
        <svg width="48" height="48" viewBox="0 0 48 48" fill="none" stroke="#858585" strokeWidth="4" aria-hidden="true">
          <circle cx="24" cy="24" r="21" />
        </svg>
      </button>
      <button type="button" aria-label="返回上一页">
        <svg width="46" height="48" viewBox="0 0 46 48" fill="none" stroke="#858585" strokeWidth="4" strokeLinejoin="round" aria-hidden="true">
          <path d="M40 3v42L4 26q-2-2 0-4z" />
        </svg>
      </button>
      <svg width="262" height="44" viewBox="0 0 262 44" className="absolute right-6 bottom-[18px]" aria-hidden="true">
        <defs>
          <linearGradient id="streak" x1="0" x2="1">
            <stop offset="0" stopColor="#fff" stopOpacity="0" />
            <stop offset=".15" stopColor="#fff" stopOpacity=".8" />
            <stop offset=".55" stopColor="#ccc" stopOpacity=".4" />
            <stop offset=".85" stopColor="#999" />
            <stop offset=".97" stopColor="#444" />
            <stop offset="1" stopColor="#000" />
          </linearGradient>
          <linearGradient id="post" x1="0" y1="0" x2="0" y2="1">
            <stop offset="0" stopColor="#999" stopOpacity="0" />
            <stop offset=".4" stopColor="#888" />
            <stop offset="1" stopColor="#111" />
          </linearGradient>
        </defs>
        <g fill="url(#streak)">
          <rect x="4" y="12" width="255" height="3" />
          <rect x="4" y="21" width="255" height="3" />
          <rect x="4" y="33" width="255" height="3" />
        </g>
        <rect x="77" y="4" width="12" height="34" fill="#fff" fillOpacity=".8" />
        <rect x="74" y="4" width="4" height="36" fill="url(#post)" />
        <rect x="88" y="4" width="4" height="36" fill="url(#post)" />
        <path d="M75 38q1 2 3 2h10q3 0 3-2" fill="none" stroke="#000" strokeWidth="2" />
        <path d="M102 6v34M118 6v34" stroke="#e6e6e6" strokeWidth="2" />
      </svg>
    </nav>
  );
}

export default function App() {
  return (
    <div className="flex h-screen flex-col overflow-hidden bg-[#f7f8fa] font-['Noto_Sans_CJK_SC',sans-serif]">
      <StatusBar />
      <Header />
      <Controls />
      <main className="relative min-h-0 flex-1 overflow-hidden">
        <ul className="-mt-10 px-[45px]">
          {listings.map((item) => (
            <Listing key={item.title} item={item} />
          ))}
        </ul>
        <Watermark />
        <FloatingActions />
      </main>
      <SystemNav />
    </div>
  );
}
